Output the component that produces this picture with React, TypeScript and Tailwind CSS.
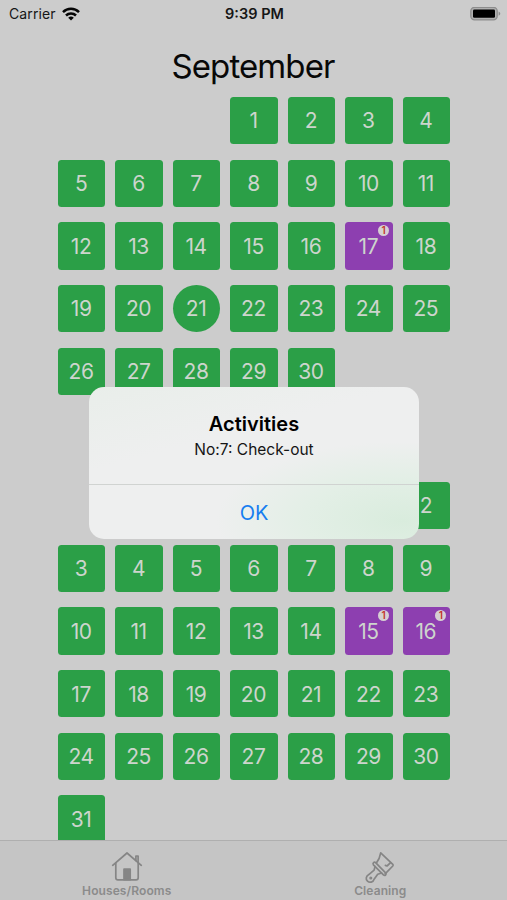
import React, { useState } from 'react';

type Month = {
  title: string;
  titleClass: string;
  firstDay: number;
  lastDay: number;
  offset: number;
  activities: number[];
  today?: number;
};

const months: Month[] = [
  { title: 'September', titleClass: 'h-[69px] pt-[14px]', firstDay: 1, lastDay: 30, offset: 3, activities: [17], today: 21 },
  { title: '', titleClass: 'h-[87px]', firstDay: 2, lastDay: 31, offset: 6, activities: [15, 16] },
];

const StatusBar = () => (
  <header className="grid h-7 shrink-0 grid-cols-3 items-center pl-[8px] pr-[6px] text-[#161616]">
    <div className="flex items-center gap-[6px] pl-px">
      <span className="text-[14px] leading-none tracking-[0.1px]">Carrier</span>
      <svg width="18" height="14" viewBox="0 0 18 14" fill="none" stroke="#050505" strokeWidth="2.5">
        <path d="M1 5.1a11.4 11.4 0 0 1 16 0" />
        <path d="M4 8.5a7.1 7.1 0 0 1 10 0" />
        <path d="M9 13.6 6.2 10.8a4 4 0 0 1 5.6 0z" fill="#050505" stroke="none" />
      </svg>
    </div>
    <span className="whitespace-nowrap text-center text-[14.5px] font-semibold leading-none">9:39 PM</span>
    <svg className="justify-self-end" width="31" height="14" viewBox="0 0 31 14">
      <rect x="0.8" y="0.3" width="26.4" height="12.6" rx="3.8" fill="#b0b0b0" stroke="#8d8d8d" strokeWidth="1.3" />
      <rect x="3" y="2.4" width="22" height="8.4" rx="1.3" fill="#000" />
      <path d="M28.6 4.6c2.2.8 2.2 3.4 0 4.2z" fill="#8d8d8d" />
    </svg>
  </header>
);

const Day = ({ day, month }: { day: number; month: Month }) => {
  const busy = month.activities.includes(day);
  const color = busy ? 'bg-[#8d3fb0]' : 'bg-[#2b9f47]';
  const shape = month.today === day ? 'rounded-full' : 'rounded-[3.5px]';

  return (
    <div className={`relative flex h-[47.3px] items-center justify-center pr-[1px] pt-[1px] text-[21px] tracking-[-0.4px] text-[#cdd5cd] ${color} ${shape}`}>
      {day}
      {busy && (
        <span className="absolute right-[3.5px] top-[2.5px] flex size-[11px] items-center justify-center rounded-full bg-[#d6cfd2] text-[10px] font-semibold leading-none tracking-normal text-[#c4352c]">
          1
        </span>
      )}
    </div>
  );
};

const Calendar = ({ month }: { month: Month }) => {
  const blanks = Array.from({ length: month.offset });
  const days = Array.from({ length: month.lastDay - month.firstDay + 1 }, (_, i) => month.firstDay + i);

  return (
    <section>
      <h1 className={`pr-[2px] text-center text-[33px] leading-[48px] tracking-[-0.9px] text-[#080808] ${month.titleClass}`}>{month.title}</h1>
      <div className="grid grid-cols-7 gap-x-[10.2px] gap-y-[15.4px]">
        {blanks.map((_, i) => <div key={`blank-${i}`} />)}
        {days.map((day) => <Day key={day} day={day} month={month} />)}
      </div>
    </section>
  );
};

const TabBar = () => (
  <nav className="grid h-[60px] shrink-0 grid-cols-2 border-t border-[#afafaf] bg-[#c5c5c5] text-[12px] font-semibold text-[#8b8b8b]">
    <div className="flex flex-col items-center pt-[10px]">
      <svg width="32" height="32" viewBox="0 0 32 32" fill="none" stroke="#858585" strokeWidth="1.7" strokeLinejoin="round" strokeLinecap="round">
        <path d="M1.7 14.3 16 2l14.3 12.3" />
        <path d="M4.8 12v14.7c0 1.4.8 2.2 2.2 2.2h18c1.4 0 2.2-.8 2.2-2.2V12" />
        <path d="M24.9 9.4V5h2.2v6.3" />
        <path d="M13 18.2h6.2v10.4H13z" fill="#858585" />
      </svg>
      <span className="leading-[15px] tracking-[0.1px]">Houses/Rooms</span>
    </div>
    <div className="flex flex-col items-center pt-[10px]">
      <svg className="overflow-visible" width="32" height="32" viewBox="0 0 32 32" fill="none" stroke="#858585" strokeWidth="1.7" strokeLinejoin="round" strokeLinecap="round">
        <path d="M12.6 11.6c2-2.4 3.4-5.7 4.1-9.7l12.1 11.5c.5.5.5 1 0 1.6l-7.7 7.8" />
        <path d="M26.6 11.7 23 15l-1.6-.6" />
        <path d="M11.6 11.6c-1.4-1.1-3.3.7-2.2 2.2l10 10.1c1.5 1.4 3.5-.4 2.2-2z" />
        <path d="m11 15.6-.9 3.5-5.3 4.5c-3 1.7-3.3 4.6-1.3 6.5 2.1 2 5.7 1.2 6.6-1.9l3.6-5 3.9-1.2" />
        <circle cx="6.8" cy="27" r=".7" />
      </svg>
      <span className="leading-[15px] tracking-[0.1px]">Cleaning</span>
    </div>
  </nav>
);

const App = () => {
  const [open, setOpen] = useState(true);

  return (
    <div className="relative flex h-[900px] w-[507px] flex-col overflow-hidden bg-[#cccccc] font-['Inter',sans-serif]">
      <StatusBar />
      <main className="min-h-0 flex-1 overflow-hidden pl-[58px] pr-[57px]">
        {months.map((month) => <Calendar key={month.lastDay} month={month} />)}
      </main>
      <TabBar />

      {open && (
        <div role="alertdialog" className="absolute left-[89px] top-[387px] flex h-[152px] w-[330px] flex-col overflow-hidden rounded-[15px] bg-[#eeefef] bg-[radial-gradient(ellipse_at_95%_88%,#d9ecdd_0%,#e3efe6_22%,transparent_42%),linear-gradient(165deg,#e9eeea_0%,#eeefef_35%)] text-center">
          <div className="h-[97px] pt-[24px]">
            <h2 className="text-[20px] font-semibold leading-[26px] text-black">Activities</h2>
            <p className="text-[15.5px] leading-[26px] text-[#151515]">No:7: Check-out</p>
          </div>
          <button onClick={() => setOpen(false)} className="flex-1 border-t border-[#d0d3d1] pt-[2px] text-[20px] text-[#167df0]">
            OK
          </button>
        </div>
      )}
    </div>
  );
};

export default App;
